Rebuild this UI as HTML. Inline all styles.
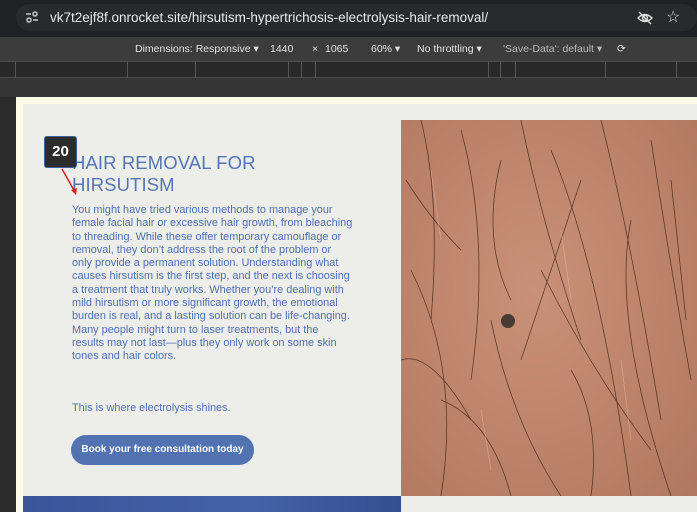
<!DOCTYPE html>
<html><head><style>
*{margin:0;padding:0;box-sizing:border-box}
body{width:697px;height:512px;overflow:hidden;background:#2b2b2b;font-family:"Liberation Sans",sans-serif;position:relative}
.top{position:absolute;left:0;top:0;width:697px;height:37px;background:#202124}
.url{position:absolute;left:16px;top:4px;width:681px;height:27px;border-radius:14px;background:#282a2d;color:#e8eaed;font-size:13.5px;line-height:27px;padding-left:34px}
.bar{position:absolute;left:0;top:37px;width:697px;height:24px;background:#3c3c3c;color:#e3e3e3;font-size:10.5px;line-height:24px}
.bar span{position:absolute;top:0}
.ruler{position:absolute;left:0;top:61px;width:697px;height:17px;background:#292929;border-top:1px solid #4a4a4a;border-bottom:1px solid #4a4a4a}
.ruler i{position:absolute;top:0;width:1px;height:16px;background:#555}
.gray{position:absolute;left:0;top:78px;width:697px;height:19px;background:#353535}
.page{position:absolute;left:16px;top:97px;width:681px;height:415px;background:#fdfbe6}
.content{position:absolute;left:23px;top:104px;width:674px;height:408px;background:#edeee9}
h1{position:absolute;left:72px;top:152px;font-weight:normal;font-size:18.5px;line-height:22px;color:#5476b8;letter-spacing:.1px}
p.body{position:absolute;left:72px;top:204px;font-size:10.9px;line-height:13.3px;color:#4f6fb3;white-space:nowrap}
p.sh{position:absolute;left:72px;top:402px;font-size:10.9px;color:#4f6fb3}
.btn{position:absolute;left:71px;top:435px;width:183px;height:30px;border-radius:15px;background:#5272b2;color:#fff;font-size:10px;font-weight:bold;line-height:30px;text-align:center}
.badge{position:absolute;left:44px;top:136px;width:33px;height:32px;background:#2c2c2c;border:1.5px solid #3d5fa0;border-radius:3px;color:#fff;font-weight:bold;font-size:15px;text-align:center;line-height:29px}
.img{position:absolute;left:401px;top:120px;width:296px;height:376px;background:radial-gradient(ellipse at 45% 45%,#c99179,#bd836a 55%,#b07760)}
.blue{position:absolute;left:23px;top:496px;width:378px;height:16px;background:linear-gradient(90deg,#3a559a,#4462a8 60%,#354f8f)}
</style></head><body>
<div class="top"><div class="url">vk7t2ejf8f.onrocket.site/hirsutism-hypertrichosis-electrolysis-hair-removal/</div>
<svg style="position:absolute;left:25px;top:10px" width="14" height="14"><g stroke="#c8c8c8" stroke-width="1.5" fill="none"><line x1="1" y1="4" x2="6" y2="4"/><circle cx="10" cy="4" r="2"/><line x1="8" y1="10" x2="13" y2="10"/><circle cx="4" cy="10" r="2"/></g></svg>
<svg style="position:absolute;left:637px;top:10px" width="16" height="16"><g stroke="#ddd" stroke-width="1.4" fill="none"><path d="M1 8 Q8 1 15 8 Q8 15 1 8Z"/><circle cx="8" cy="8" r="2.5"/><line x1="2" y1="2" x2="14" y2="14"/></g></svg>
<div style="position:absolute;left:666px;top:7px;color:#ddd;font-size:16px">☆</div></div>
<div class="bar"><span style="left:135px">Dimensions: Responsive ▾</span><span style="left:270px">1440</span><span style="left:312px">×</span><span style="left:325px">1065</span><span style="left:371px">60% ▾</span><span style="left:417px">No throttling ▾</span><span style="left:503px;color:#bbb">'Save-Data': default ▾</span><span style="left:617px">⟳</span></div>
<div class="ruler"><i style="left:15px"></i><i style="left:127px"></i><i style="left:195px"></i><i style="left:288px"></i><i style="left:301px"></i><i style="left:315px"></i><i style="left:488px"></i><i style="left:500px"></i><i style="left:515px"></i><i style="left:605px"></i><i style="left:676px"></i></div>
<div class="gray"></div>
<div class="page"></div>
<div class="content"></div>
<h1>HAIR REMOVAL FOR<br>HIRSUTISM</h1>
<p class="body">You might have tried various methods to manage your<br>female facial hair or excessive hair growth, from bleaching<br>to threading. While these offer temporary camouflage or<br>removal, they don’t address the root of the problem or<br>only provide a permanent solution. Understanding what<br>causes hirsutism is the first step, and the next is choosing<br>a treatment that truly works. Whether you’re dealing with<br>mild hirsutism or more significant growth, the emotional<br>burden is real, and a lasting solution can be life-changing.<br>Many people might turn to laser treatments, but the<br>results may not last—plus they only work on some skin<br>tones and hair colors.</p>
<p class="sh">This is where electrolysis shines.</p>
<div class="btn">Book your free consultation today</div>
<div class="img"><svg width="296" height="376"><g stroke="#3a2118" stroke-width="0.8" fill="none" opacity=".75">
<path d="M20 0 Q40 80 30 200"/><path d="M60 10 Q90 120 70 260"/><path d="M120 0 Q140 100 180 220"/><path d="M150 30 Q200 150 230 376"/><path d="M200 0 Q230 120 260 300"/><path d="M250 20 Q270 150 290 260"/><path d="M10 150 Q60 250 40 376"/><path d="M90 200 Q110 300 160 376"/><path d="M140 150 Q190 250 250 330"/><path d="M230 100 Q210 200 270 376"/><path d="M40 280 Q90 300 110 376"/><path d="M180 60 Q150 150 120 240"/><path d="M270 60 L285 200"/><path d="M5 60 Q30 100 60 130"/><path d="M100 40 Q80 120 110 180"/><path d="M170 250 Q200 300 190 376"/><path d="M0 240 Q30 230 70 300"/></g>
<g stroke="#e8d0c0" stroke-width="0.6" opacity=".5"><path d="M30 50 L40 120"/><path d="M160 110 L170 180"/><path d="M220 240 L230 320"/><path d="M80 290 L90 350"/></g>
<circle cx="107" cy="201" r="7" fill="#4a3a34"/></svg></div>
<div class="blue"></div>
<div class="badge">20</div>
<svg style="position:absolute;left:60px;top:168px" width="20" height="30"><line x1="2" y1="1" x2="15" y2="24" stroke="#d8231c" stroke-width="1.5"/><path d="M11 22 L16 27 L17 20Z" fill="#d8231c"/></svg>
</body></html>
